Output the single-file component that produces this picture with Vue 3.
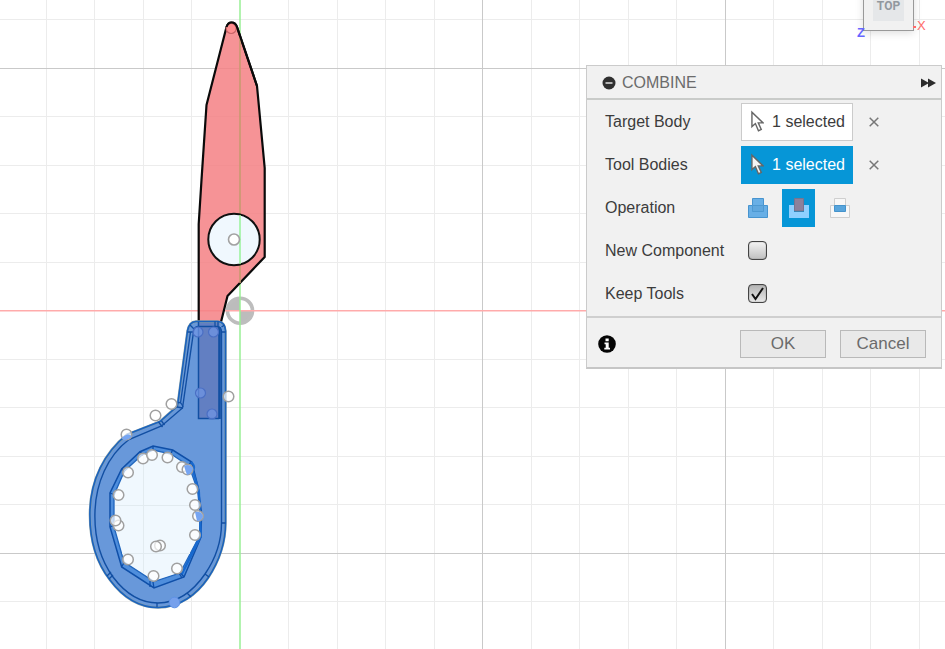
<script setup>
import { ref } from 'vue'

const GRID = 48.5
const ORIGIN = { x: 240, y: 310.5 }

function gridLines(start, from, to) {
  const lines = []
  for (let i = from; i <= to; i++) {
    if (i !== 0) lines.push({ pos: Math.floor(start + i * GRID) + 0.5, major: i % 5 === 0 })
  }
  return lines
}
const columns = gridLines(ORIGIN.x, -4, 40)
const rows = gridLines(ORIGIN.y, -6, 30)

const points = [
  [171.5, 404], [155.5, 415.5], [126.5, 434.5], [228.5, 396.5], [143, 458.5], [152, 455],
  [167.5, 457.5], [182, 467], [187.5, 469.5], [128, 472.5], [118.5, 495], [192.5, 489],
  [195, 505], [198, 516], [195, 535], [118.5, 525.5], [115.5, 520.5], [128, 559.5],
  [153.5, 576], [177, 568.5], [160, 545.5], [156, 546.5]
]
const tintedPoints = [[198, 332], [213.5, 332], [200.5, 393], [212, 414]]

const handleOutline =
  'M196 321.500H218Q225 322 225.500 331V523C225.500 543 220 560 208 578C197 594 180 607.500 158 607.500C138 607.500 122 596 110 580C96 562 89 540 90 510C91 480 104 453 127 434.500L160 421.500L177.500 406L187.500 331Q189 322 196 321.500Z'

const selections = ref([
  { id: 'target', label: 'Target Body', active: false },
  { id: 'tools', label: 'Tool Bodies', active: true }
])
const operation = ref('cut')
const newComponent = ref(false)
const keepTools = ref(true)
</script>

<template>
  <main class="workspace">
    <svg class="canvas" aria-hidden="true">
      <g v-for="pass in [false, true]" :key="pass">
        <template v-for="c in columns" :key="'c' + c.pos">
          <line v-if="c.major === pass" :x1="c.pos" :x2="c.pos" y1="0" y2="100%" :class="c.major ? 'major' : 'minor'" />
        </template>
        <template v-for="r in rows" :key="'r' + r.pos">
          <line v-if="r.major === pass" x1="0" x2="100%" :y1="r.pos" :y2="r.pos" :class="r.major ? 'major' : 'minor'" />
        </template>
      </g>

      <!-- origin marker -->
      <circle cx="240" cy="310.700" r="14" fill="#fff" />
      <path d="M240 310.700V298a13 13 0 0 0-13 12.700zM240 310.700h13a13 13 0 0 1-13 12.700z" fill="#bcbcbc" />
      <circle cx="240" cy="310.700" r="12.500" fill="none" stroke="#bdbdbd" stroke-width="3.600" />
      <line x1="0" x2="100%" y1="310.700" y2="310.700" stroke="#ffabab" stroke-width="1.600" />
      <line x1="240" x2="240" y1="0" y2="100%" stroke="#98ef94" stroke-width="1.500" />

      <!-- blade -->
      <path
        d="M198.700 322V224L201.500 180L206.500 105L226.500 27Q228 22.500 231.500 22.500Q235.500 22.500 237 27L257 86L264.700 168V257L227.500 296L221 322"
        fill="#f58084" fill-opacity=".85" stroke="#0a0a0a" stroke-width="2.200" stroke-linejoin="round" />
      <line x1="240" x2="240" y1="37" y2="283" stroke="#c99a70" stroke-width="1.500" />
      <circle cx="231.200" cy="28.500" r="5" fill="#ff8f90" stroke="#c86468" stroke-width="1.200" />
      <path d="M226.500 27Q228 22.500 231.500 22.500Q235.500 22.500 237 27L257 86" fill="none" stroke="#0a0a0a" stroke-width="2.200" />
      <circle cx="234" cy="239.500" r="25.700" fill="#f0f8fe" stroke="#101010" stroke-width="2" />
      <line x1="240" x2="240" y1="215" y2="264" stroke="#98f39a" stroke-width="1.500" />
      <circle cx="234" cy="239.500" r="5.500" fill="#fff" stroke="#a2a2a2" stroke-width="1.600" />

      <!-- handle -->
      <path :d="handleOutline" fill="#6898da" />
      <path
        d="M153 446L172.700 450L191.700 462L198 487L201.500 513L201 537L184 577L154 588L121.700 567L110 527V493L121.700 469L140 451.700Z"
        fill="#4f8edc" stroke="#0f4fa8" stroke-width="1.500" />
      <path
        d="M153.300 450L171 454L189 466L197.500 490L200 513L199.500 536L180 573L154 581.500L124 562L114 527L114 495L124.500 471L142 455Z"
        fill="#f0f8fe" stroke="#2166bd" stroke-width="1.300" />
      <path d="M143.500 456v117M115 505.500h83M122 553.500h68" class="faint" />
      <path d="M153 446v4M172.500 450l-2 5M140 451.500l3 4M121.500 469l3 3M110 493l5 2M110 527l5-2M121.500 567l3-5M154 588l-1-6M184 577l-4-5M150 581v6M179 573l3 5M191 462l-3 4" stroke="#0f4fa8" stroke-width="1.300" />
      <path d="M191 462q5 4 2 9L199 491L201 536L182 574L191 555L199 538" fill="none" stroke="#1769cf" stroke-width="2" />

      <rect x="198.500" y="322" width="21" height="96.500" fill="#627fc2" />
      <g fill="none" stroke="#124fa2">
        <path :d="handleOutline" stroke="#8aa0a4" stroke-width="2.400" />
        <path :d="handleOutline" stroke="#1a63c0" stroke-width="1.600" />
        <path
          d="M198 326.500H217Q221.500 327 221.500 332V523C221.500 542 216 558 205 574C194 590 178 603 158 603C140 603 125 593 113 577C100 559 94 537 95 511C96 484 107 456 129 439.500L161.500 426L182.500 408L193.500 332Q194 327 198 326.500Z"
          stroke-width="1.400" />
        <path d="M190.500 332L180.500 403M177 407l6 1M178 403q3-2 5 4M158.500 422l4 5M161.500 421l3 4M127 434.500l3 5M190 325l4 4M187.500 332h6M221.500 332h4M221.500 327l3-2M215 321.500v5M218 321.500v5M221.500 523h4M205 574l4 3M109 579l4-4M107 576l4-4M157 603v4M187 593l4 4" stroke-width="1.300" />
        <path d="M198.500 322V418.500H219" stroke-width="1.500" />
        <path d="M219.500 327V419" stroke-width="2.600" />
      </g>

      <circle v-for="([x, y], i) in points" :key="'p' + i" :cx="x" :cy="y" r="5.300" fill="#fff" fill-opacity=".7" stroke="#a0a0a0" stroke-width="1.500" />
      <circle v-for="([x, y], i) in tintedPoints" :key="'t' + i" :cx="x" :cy="y" r="5" fill="#7096e4" fill-opacity=".7" stroke="#4a6fc4" stroke-width="1.200" />
      <circle cx="174.500" cy="602.500" r="5.300" fill="#76a0ec" stroke="#5f92e6" />
      <path d="M121.500 438Q127 432 132 436Q129 440 124 440ZM184 466Q189 463 193 468Q192 474 187 475ZM195 512Q201 511 203 516Q202 521 197 521Z" fill="#76a5f2" />
    </svg>

    <div class="viewcube">
      <span class="face">TOP</span>
      <span class="axis axis-x">X</span>
      <span class="axis axis-z">Z</span>
    </div>

    <form class="panel" @submit.prevent>
      <header class="head">
        <button class="plain" type="button" aria-label="Collapse">
          <svg width="14" height="14" viewBox="0 0 14 14"><circle cx="7" cy="7" r="6.500" fill="#303030" /><path d="M3.500 7h7" stroke="#d8d8d8" stroke-width="1.600" /></svg>
        </button>
        <h1>COMBINE</h1>
        <button class="plain expand" type="button" aria-label="Expand">
          <svg width="15" height="10" viewBox="0 0 15 10"><path d="M0 .5L8 5L0 9.500ZM7 .5L15 5L7 9.500Z" fill="#2b2b2b" /></svg>
        </button>
      </header>

      <div class="body">
        <div v-for="s in selections" :key="s.id" class="row">
          <label :for="s.id">{{ s.label }}</label>
          <button :id="s.id" type="button" class="select" :class="{ active: s.active }">
            <svg width="14" height="23" viewBox="0 0 14 23">
              <path d="M1 1.500V17L4.700 13.700L8 21.500L11 20L7.800 13H13Z" :fill="s.active ? '#f4f4f4' : '#fff'" stroke="#666" stroke-width="1.500" />
            </svg>
            <span>1 selected</span>
          </button>
          <button type="button" class="plain clear" :aria-label="'Clear ' + s.label">
            <svg width="10" height="10" viewBox="0 0 10 10"><path d="M.7 .7L9.300 9.300M9.300 .7L.7 9.300" stroke="#777" stroke-width="1.500" /></svg>
          </button>
        </div>

        <div class="row" role="radiogroup" aria-labelledby="operation-label">
          <span id="operation-label">Operation</span>
          <div class="operations">
            <label class="op" :class="{ active: operation === 'join' }">
              <input v-model="operation" type="radio" name="operation" value="join" aria-label="Join" />
              <svg width="20" height="20" viewBox="0 0 20 20"><path d="M4.500 .5h11v7h4v12H.5v-12h4z" fill="#68afe6" stroke="#4794cf" /><path d="M4.500 7.500v6h11v-6z" fill="#5fa7de" stroke="#4d99d2" /></svg>
            </label>
            <label class="op" :class="{ active: operation === 'cut' }">
              <input v-model="operation" type="radio" name="operation" value="cut" aria-label="Cut" />
              <svg width="20" height="20" viewBox="0 0 20 20"><path d="M0 7h5v7h10V7h5v13H0z" fill="#8fd0ff" /><path d="M5.500 .5h9v12.500h-9z" fill="#8c819b" stroke="#77748f" /></svg>
            </label>
            <label class="op" :class="{ active: operation === 'intersect' }">
              <input v-model="operation" type="radio" name="operation" value="intersect" aria-label="Intersect" />
              <svg width="20" height="20" viewBox="0 0 20 20"><path d="M4.500 .5h11v7h4v12H.5v-12h4z" fill="#f7f7f7" stroke="#cfcfcf" /><path d="M4.500 7.500h11v6h-11z" fill="#58a5dc" stroke="#4593cb" /></svg>
            </label>
          </div>
        </div>

        <div class="row">
          <label for="new-component">New Component</label>
          <span class="check"><input id="new-component" v-model="newComponent" type="checkbox" /></span>
        </div>
        <div class="row">
          <label for="keep-tools">Keep Tools</label>
          <span class="check">
            <input id="keep-tools" v-model="keepTools" type="checkbox" />
            <svg v-if="keepTools" width="19" height="19" viewBox="0 0 19 19"><path d="M4 10L7.500 15L15 4" fill="none" stroke="#111" stroke-width="2" /></svg>
          </span>
        </div>
      </div>

      <footer class="foot">
        <button class="plain info" type="button" aria-label="Information">
          <svg width="18" height="18" viewBox="0 0 18 18"><circle cx="9" cy="9" r="8.800" fill="#050505" /><path d="M7.500 3.500h3.200v2.700H7.500zM6.500 7.500h4.200v5.300h1.300v1.700H6.300v-1.700h1.400V9.200H6.500z" fill="#fff" /></svg>
        </button>
        <button class="action" type="submit">OK</button>
        <button class="action" type="button">Cancel</button>
      </footer>
    </form>
  </main>
</template>

<style>
body {
  margin: 0;
}
</style>

<style scoped>
.workspace {
  position: relative;
  display: flex;
  justify-content: flex-end;
  align-items: flex-start;
  box-sizing: border-box;
  min-height: 100vh;
  padding: 65px 3px 0 0;
  overflow: hidden;
  background: #fff;
  color: #3c3c3c;
  font: 16px/20px "Liberation Sans", Arial, sans-serif;
}
.canvas {
  position: absolute;
  inset: 0;
  width: 100%;
  height: 100%;
}
.minor {
  stroke: #ececec;
}
.major {
  stroke: #c9c9c9;
}
.faint {
  fill: none;
  stroke: #e2ebf0;
}
.viewcube {
  position: absolute;
  top: -20px;
  right: 31px;
  box-sizing: border-box;
  width: 51px;
  height: 51px;
  padding: 9px;
  border: 1px solid #999;
  background: #f1f1f1;
  box-shadow: 0 2px 8px #0002;
}
.face {
  display: block;
  height: 31px;
  background: #e5e7e9;
  color: #92989e;
  font: bold 12px/32px "Roboto", sans-serif;
  text-align: center;
}
.axis {
  position: absolute;
  font-size: 13px;
  line-height: 14px;
}
.axis-x {
  left: 53px;
  top: 38px;
  color: #ff6b6b;
}
.axis-x::before {
  content: "";
  position: absolute;
  left: -4px;
  top: 7px;
  width: 3px;
  height: 2px;
  background: #ff6b6b;
}
.axis-z {
  left: -7px;
  top: 45px;
  color: #6666ff;
  font-weight: bold;
}
.panel {
  position: relative;
  box-sizing: border-box;
  width: 356px;
  border: 1px solid #cbcbcb;
  border-bottom: 2px solid #c6c6c6;
  background: #f1f1f1;
}
.head {
  display: flex;
  align-items: center;
  gap: 6px;
  box-sizing: border-box;
  height: 34px;
  padding: 2px 5px 0 15px;
  border-bottom: 2px solid #c9cbc9;
}
h1 {
  margin: 0;
  color: #6b6b6b;
  font-size: 16px;
  font-weight: 400;
}
.plain {
  display: flex;
  padding: 0;
  border: 0;
  background: none;
}
.expand {
  margin-left: auto;
}
.body {
  padding: 0 0 1px 18px;
  border-bottom: 2px solid #cfcfcf;
}
.row {
  display: grid;
  grid-template-columns: 136px 112px 1fr;
  align-items: center;
  height: 43px;
}
.select {
  display: flex;
  align-items: center;
  gap: 8px;
  box-sizing: border-box;
  height: 38px;
  padding: 0 7px 0 9px;
  border: 1px solid #cbcbcb;
  background: #fff;
  color: #3c3c3c;
  font: inherit;
  white-space: nowrap;
}
.select.active {
  border-color: #0696d7;
  background: #0696d7;
  color: #fff;
}
.clear {
  margin-left: 16px;
}
.operations {
  display: flex;
  gap: 8px;
}
.op {
  position: relative;
  display: flex;
  flex: none;
  align-items: center;
  justify-content: center;
  width: 33px;
  height: 38px;
}
.op.active {
  background: #0696d7;
}
.op input {
  position: absolute;
  inset: 0;
  margin: 0;
  opacity: 0;
}
.check {
  position: relative;
  display: flex;
  margin-left: 7px;
}
.check input {
  appearance: none;
  box-sizing: border-box;
  width: 19px;
  height: 19px;
  margin: 0;
  border: 1px solid #444;
  border-radius: 4px;
  background: linear-gradient(#b4b4b4, #e8e8e8);
  box-shadow: inset 0 0 1px #444;
}
.check input:not(:checked) {
  background: linear-gradient(#f4f4f4, #c0c0c0);
}
.check svg {
  position: absolute;
  left: 0;
  top: 0;
  pointer-events: none;
}
.foot {
  display: flex;
  align-items: center;
  gap: 14px;
  box-sizing: border-box;
  height: 49px;
  padding: 2px 15px 0 11px;
}
.info {
  margin-right: auto;
}
.action {
  box-sizing: border-box;
  width: 86px;
  height: 28px;
  padding: 0;
  border: 1px solid #b9b9b9;
  background: #e9e9e9;
  color: #6b6b6b;
  font: 17px/20px "Liberation Sans", Arial, sans-serif;
}
</style>
